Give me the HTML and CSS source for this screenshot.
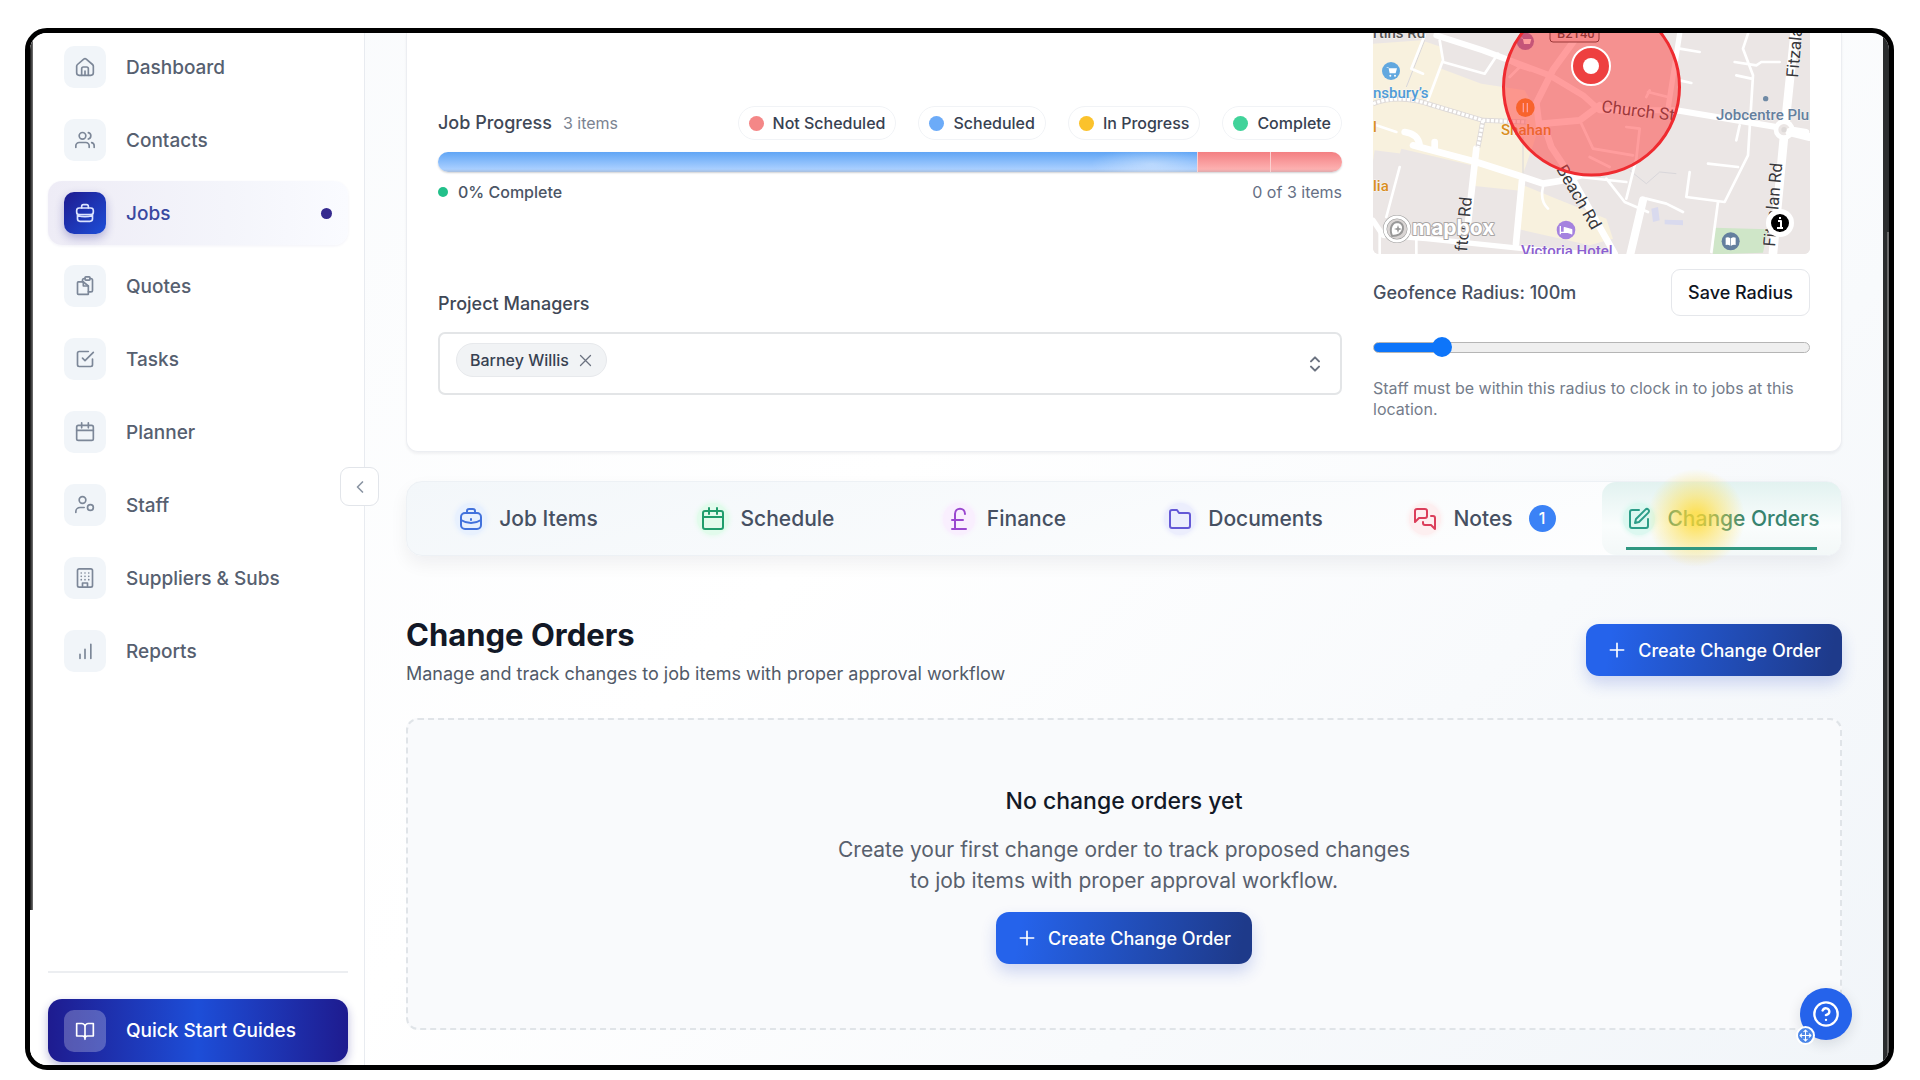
FILE: index.html
```html
<!DOCTYPE html>
<html lang="en">
<head>
    <meta charset="UTF-8">
    <meta name="viewport" content="width=device-width, initial-scale=1.0">
    <title>Job - Change Orders</title>
    <link rel="stylesheet" href="styles.css">
</head>
<body>

<div class="window">
    <div class="window-edge"></div>

    <!-- Sidebar -->
    <aside class="sidebar">
        <nav class="nav">
            <a class="nav-item" href="#">
                <span class="nav-icon"><svg viewBox="0 0 24 24"><path d="M2 11a3 3 0 0 1 1-2l7.500-6.500a2.500 2.500 0 0 1 3 0L21 9a3 3 0 0 1 1 2v8a3 3 0 0 1-3 3H5a3 3 0 0 1-3-3z"/><path d="M8 22v-8a2 2 0 0 1 2-2h4a2 2 0 0 1 2 2v8M12 17v5"/></svg></span>
                Dashboard
            </a>
            <a class="nav-item" href="#">
                <span class="nav-icon"><svg viewBox="0 0 24 24"><circle cx="9" cy="7" r="4"/><path d="M1 21v-2a4 4 0 0 1 4-4h8a4 4 0 0 1 4 4v2M23 21v-2a4 4 0 0 0-3-3.870M16 3.130a4 4 0 0 1 0 7.750"/></svg></span>
                Contacts
            </a>
            <a class="nav-item active" href="#">
                <span class="nav-icon"><svg viewBox="0 0 24 24"><path d="M5 6h14a3 3 0 0 1 3 3v2c0 2-2 3-4 3H6c-2 0-4-1-4-3V9a3 3 0 0 1 3-3z"/><path d="M3 14v5a3 3 0 0 0 3 3h12a3 3 0 0 0 3-3v-5M8 6V4a2 2 0 0 1 2-2h4a2 2 0 0 1 2 2v2M3 15c6 2 12 2 18 0"/></svg></span>
                Jobs
                <span class="nav-dot"></span>
            </a>
            <a class="nav-item" href="#">
                <span class="nav-icon"><svg viewBox="0 0 24 24"><path d="M4 7h6l6 5v10H4a1 1 0 0 1-1-1V8a1 1 0 0 1 1-1z"/><path d="M10 7v5h6M9 7V5a2 2 0 0 1 2-2h1M18 3h1a2 2 0 0 1 2 2v12a2 2 0 0 1-2 2h-3"/><rect x="12" y="1" width="6" height="4" rx="1"/></svg></span>
                Quotes
            </a>
            <a class="nav-item" href="#">
                <span class="nav-icon"><svg viewBox="0 0 24 24"><path d="m9 11 3 3L22 4"/><path d="M21 12v7a2 2 0 0 1-2 2H5a2 2 0 0 1-2-2V5a2 2 0 0 1 2-2h11"/></svg></span>
                Tasks
            </a>
            <a class="nav-item" href="#">
                <span class="nav-icon"><svg viewBox="0 0 24 24"><rect x="2" y="4" width="20" height="18" rx="2"/><path d="M16 1v6M8 1v6M2 10h20"/></svg></span>
                Planner
            </a>
            <a class="nav-item" href="#">
                <span class="nav-icon"><svg viewBox="0 0 24 24"><circle cx="9" cy="6" r="4"/><circle cx="18.500" cy="15" r="3.500"/><path d="M1 21v-1a5 5 0 0 1 5-5h5"/></svg></span>
                Staff
            </a>
            <a class="nav-item" href="#">
                <span class="nav-icon"><svg viewBox="0 0 24 24"><rect x="3" y="1" width="18" height="22" rx="2"/><path d="M9 22v-4h6v4M7.500 6h.01M12 6h.01M16.500 6h.01M7.500 10h.01M12 10h.01M16.500 10h.01M7.500 14h.01M12 14h.01M16.500 14h.01"/></svg></span>
                Suppliers &amp; Subs
            </a>
            <a class="nav-item" href="#">
                <span class="nav-icon"><svg viewBox="0 0 24 24"><path d="M6 21v-5M12 21V10M19 21V4"/></svg></span>
                Reports
            </a>
        </nav>
        <div class="sidebar-footer">
            <button class="guides-button" type="button">
                <span class="nav-icon"><svg viewBox="0 0 24 24"><path d="M2 3h6a4 4 0 0 1 4 4v14a3 3 0 0 0-3-3H2zM22 3h-6a4 4 0 0 0-4 4v14a3 3 0 0 1 3-3h7zM12 21v1"/></svg></span>
                Quick Start Guides
            </button>
        </div>
        <button class="collapse-button" type="button" aria-label="Collapse sidebar">
            <svg viewBox="0 0 24 24"><path d="m15 18-6-6 6-6"/></svg>
        </button>
    </aside>

    <main class="main">
        <section class="card">
            <div class="card-left">
                <div class="progress-head">
                    <h2 class="label">Job Progress</h2>
                    <span class="muted">3 items</span>
                    <ul class="legend">
                        <li><span class="dot red"></span>Not Scheduled</li>
                        <li><span class="dot blue"></span>Scheduled</li>
                        <li><span class="dot yellow"></span>In Progress</li>
                        <li><span class="dot green"></span>Complete</li>
                    </ul>
                </div>
                <div class="progress-bar">
                    <div class="segment scheduled" style="width: 84%"></div>
                    <div class="segment not-scheduled" style="width: 8%"></div>
                    <div class="segment not-scheduled" style="width: 8%"></div>
                </div>
                <div class="progress-foot">
                    <span class="done"><span class="small-dot"></span>0% Complete</span>
                    <span>0 of 3 items</span>
                </div>

                <h2 class="label managers-label">Project Managers</h2>
                <div class="managers-select">
                    <span class="chip">Barney Willis
                        <button type="button" aria-label="Remove Barney Willis"><svg viewBox="0 0 24 24"><path d="M20 4 4 20M4 4l16 16"/></svg></button>
                    </span>
                    <button class="select-toggle" type="button" aria-label="Choose managers"><svg viewBox="0 0 24 24"><path d="m6 8 6-6 6 6M6 16l6 6 6-6"/></svg></button>
                </div>
            </div>

            <div class="card-right">
                <div class="map">
                    <svg viewBox="0 0 437 221" preserveAspectRatio="xMidYMid slice">
                        <g transform="scale(.33333) translate(-70 -38)">
                            <rect x="70" y="38" width="1312" height="664" fill="#ebe6e5"/>
                            <path fill="#f8f1de" d="M70 70 215 60l60 20 0 65 120 45 130 20 50 90-20 60-45 130 110 45 150 60 20 60-70 20-220-50 10-90-145-15 0-70-130-40-160-20-30 200-60-40z"/>
                            <path fill="#ebe6e5" d="M155 385l210 50-20 200-260-20zM375 497l145 15-20 145-155-5z"/>
                            <path fill="#cfe6c8" d="M1095 622l160 5-15 70-150 5z"/>
                            <path fill="#d9daee" d="M905 565l20-5 5 40-20 5zM945 598l55 2v15l-55-3z"/>
                            <g fill="none" stroke="#d8d6da" stroke-width="3">
                                <path d="M520 350v110M225 60l-55 140M840 450l50 40 40-35 50 5"/>
                            </g>
                            <g fill="none" stroke="#fff" stroke-linecap="round" stroke-linejoin="round">
                                <path stroke-width="18" d="M260 45l140 45 200 75 100 60 50 45 230 0 390 65"/>
                                <path stroke-width="20" d="M690 38l-80 110-50 100 10 80M580 310l110-10 60-45M585 320l20 60 60 90 130 230"/>
                                <path stroke-width="20" d="M190 375l190 50 140 45 60 20 50-8 60-16M380 385l-30 270M517 480l-18 190M255 365v20M165 335q40 5 45 40"/>
                                <path stroke-width="26" d="M1335 38l-30 290-35 370"/>
                                <circle cx="1303" cy="328" r="24" fill="#ebe6e5" stroke-width="14"/>
                                <path stroke-width="24" d="M1320 335l60 15M880 540l-40 170"/>
                                <path stroke-width="16" d="M990 40l-35 225M70 600l30 45 130 10 290 30 190 15"/>
                                <path stroke-width="8" d="M225 45l-40 100 35 15M270 60l10 60-45 120M280 125l125 35 40-60M450 110l60 30-30 30M510 140l30 10M80 315l60 20M150 440l-40 150M895 215l60 15M890 230l10-20M695 310l35 75 120 20M830 320l40 5-10 90-30 120M770 475l55 70 70 30M720 410l60 30M690 470l140 15M890 535l60 15 50 25M1020 455l-10 75 115 15 70-140 15-240-30-80 20-60M1155 125l65 10 15-10h55M1160 165l45 10M1160 360l10-45M1075 430l90 10M1105 545l-20 150M990 85l60 10M990 180l35 8M580 500q-10 40 15 65M200 640v60M90 625v75"/>
                            </g>
                            <path d="M70 250q80-30 180 5l150 45 130 5M400 300l-15 80" fill="none" stroke="#ddd9d8" stroke-width="15"/>
                            <path d="M70 250q80-30 180 5l150 45 130 5M400 300l-15 80" fill="none" stroke="#fff" stroke-width="10" stroke-dasharray="9 4"/>
                            <circle cx="1303" cy="328" r="8" fill="#ddd9d8"/>
                            <circle cx="1248" cy="235" r="8" fill="#6f8aa5"/>
                            <circle cx="124" cy="152" r="27" fill="#62a8df"/>
                            <path d="M109 140h7l4 19h18l4-15h-24z" fill="#fff"/><circle cx="122" cy="166" r="3" fill="#fff"/><circle cx="136" cy="166" r="3" fill="#fff"/>
                            <circle cx="649" cy="629" r="28" fill="#a582df"/>
                            <path d="M632 617v25M632 636h34M666 642v-14l-22-6v13" fill="#fff" stroke="#fff" stroke-width="4"/>
                            <circle cx="1143" cy="663" r="27" fill="#647f9e"/>
                            <path d="M1128 652q8-3 14 2v22q-7-4-14-2zM1158 652q-8-3-14 2v22q7-4 14-2z" fill="#fff"/>
                            <circle cx="527" cy="63" r="26" fill="#8b6fb5"/>
                            <path d="M512 52h7l4 19h18l4-15h-24z" fill="#fff"/>
                            <circle cx="527" cy="262" r="28" fill="#f08a1d"/>
                            <path d="M521 248v10M521 258v18M533 248v28" stroke="#fff" stroke-width="4"/>
                        </g>
                        <g class="map-text">
                            <text x="0" y="5">rtins Rd</text>
                            <text x="0" y="65" fill="#4f9bd8">nsbury’s</text>
                            <text x="128" y="102" fill="#d98e1f">Shahan</text>
                            <text x="0" y="99" fill="#d98e1f">l</text>
                            <text x="0" y="158" fill="#d98e1f">lia</text>
                            <text x="343" y="87" fill="#647f9e">Jobcentre Plu</text>
                            <text x="148" y="223" fill="#8b5fd0">Victoria Hotel</text>
                            <text class="road" transform="translate(228 79) rotate(7)">Church St</text>
                            <text class="road" transform="translate(183 136) rotate(60)">Beach Rd</text>
                            <text class="road" transform="translate(94 219) rotate(-85)">fton Rd</text>
                            <text class="road" transform="translate(425 45) rotate(-85)">Fitzalan</text>
                            <text class="road" transform="translate(402 214) rotate(-85)">Fitzalan Rd</text>
                        </g>
                        <rect x="177" y="-9" width="49" height="18" rx="3" fill="#f0d5d5" stroke="#333" stroke-width="1"/>
                        <text class="shield" x="184" y="5">B2140</text>
                        <circle cx="218.500" cy="54" r="88" fill="#ff3b3b" fill-opacity=".5" stroke="#ef2b30" stroke-width="3"/>
                        <circle cx="218" cy="33" r="19" fill="#ee4040" stroke="#fff" stroke-width="2"/>
                        <circle cx="218" cy="33" r="8" fill="#fff"/>
                        <circle cx="24" cy="196" r="12" fill="#d9d5d4" stroke="#999" stroke-width="4"/>
                        <circle cx="24" cy="196" r="12" fill="none" stroke="#fff" stroke-width="3"/>
                        <path d="M19 203c-3-8 0-14 6-14a6 6 0 0 1 5 7c-1 5-6 7-11 7z" fill="#fff" stroke="#999"/>
                        <path d="m25 192 1 3 3 1-3 1-1 3-1-3-3-1 3-1z" fill="#999"/>
                        <text class="mapbox" x="39" y="202">mapbox</text>
                        <circle cx="407" cy="190" r="14" fill="#fff"/>
                        <circle cx="407" cy="190" r="9" fill="#000"/>
                        <path d="M405 188h3v6M404 195h6M407 184v2" fill="none" stroke="#fff" stroke-width="2"/>
                    </svg>
                </div>
                <div class="radius-row">
                    <label for="radius">Geofence Radius: 100m</label>
                    <button class="save-button" type="button">Save Radius</button>
                </div>
                <input class="slider" id="radius" type="range" min="0" max="100" value="14">
                <p class="hint">Staff must be within this radius to clock in to jobs at this location.</p>
            </div>
        </section>

        <nav class="tabs">
            <a class="tab" href="#">
                <span class="tab-icon job"><svg viewBox="0 0 24 24"><rect x="2" y="6" width="20" height="16" rx="4"/><path d="M8 6V4a2 2 0 0 1 2-2h4a2 2 0 0 1 2 2v2M2 13c6 4 14 4 20 0M12 12v1"/></svg></span>
                Job Items
            </a>
            <a class="tab" href="#">
                <span class="tab-icon schedule"><svg viewBox="0 0 24 24"><rect x="2" y="4" width="20" height="18" rx="2"/><path d="M16 1v6M8 1v6M2 10h20"/></svg></span>
                Schedule
            </a>
            <a class="tab" href="#">
                <span class="tab-icon finance"><svg viewBox="0 0 24 24"><path d="M18 7c0-7-10-7-10 0v14M5 13h11M5 22h14"/></svg></span>
                Finance
            </a>
            <a class="tab" href="#">
                <span class="tab-icon documents"><svg viewBox="0 0 24 24"><path d="M22 19a2 2 0 0 1-2 2H4a2 2 0 0 1-2-2V5a2 2 0 0 1 2-2h5l2 3h9a2 2 0 0 1 2 2z"/></svg></span>
                Documents
            </a>
            <a class="tab" href="#">
                <span class="tab-icon notes"><svg viewBox="0 0 24 24"><path d="M14 9a2 2 0 0 1-2 2H6l-4 4V4a2 2 0 0 1 2-2h8a2 2 0 0 1 2 2zM18 9h2a2 2 0 0 1 2 2v11l-4-4h-6a2 2 0 0 1-2-2v-1"/></svg></span>
                Notes
                <span class="badge">1</span>
            </a>
            <a class="tab current" href="#">
                <span class="tab-icon changes"><svg viewBox="0 0 24 24"><path d="M12 3H5a2 2 0 0 0-2 2v14a2 2 0 0 0 2 2h14a2 2 0 0 0 2-2v-7"/><path d="M18.400 2.600a2.100 2.100 0 0 1 3 3L12 15l-4 1 1-4z"/></svg></span>
                Change Orders
                <span class="click-glow"></span>
            </a>
        </nav>

        <header class="page-head">
            <div>
                <h1>Change Orders</h1>
                <p>Manage and track changes to job items with proper approval workflow</p>
            </div>
            <button class="create-button" type="button">
                <svg viewBox="0 0 24 24"><path d="M12 4v16M4 12h16"/></svg>
                Create Change Order
            </button>
        </header>

        <section class="empty">
            <h3>No change orders yet</h3>
            <p>Create your first change order to track proposed changes to job items with proper approval workflow.</p>
            <button class="create-button" type="button">
                <svg viewBox="0 0 24 24"><path d="M12 4v16M4 12h16"/></svg>
                Create Change Order
            </button>
        </section>
    </main>

    <div class="scrollbar"><div class="scroll-thumb"></div></div>

    <div class="help">
        <button class="help-button" type="button" aria-label="Help">
            <svg viewBox="0 0 24 24"><circle cx="12" cy="12" r="10"/><path d="M9.100 9a3 3 0 0 1 5.800 1c0 2-3 3-3 3M12 17h.01"/></svg>
        </button>
        <span class="help-move"><svg viewBox="0 0 24 24"><path d="M12 2v20M2 12h20M9 5l3-3 3 3M9 19l3 3 3-3M5 9l-3 3 3 3M19 9l3 3-3 3"/></svg></span>
    </div>
</div>

</body>
</html>
```

FILE: styles.css
```css
* {
    box-sizing: border-box;
}

body {
    margin: 0;
    padding: 28px 26px 10px 25px;
    height: 100vh;
    background: #ffffff;
    font-family: Inter, "Liberation Sans", sans-serif;
    color: #374151;
}

h1, h2, h3, p, ul {
    margin: 0;
    padding: 0;
}

a {
    color: inherit;
    text-decoration: none;
}

button {
    font-family: inherit;
    cursor: pointer;
}

svg {
    display: block;
    fill: none;
    stroke: currentColor;
    stroke-width: 2;
    stroke-linecap: round;
    stroke-linejoin: round;
}

.window {
    position: relative;
    display: flex;
    height: 100%;
    border: 5px solid #000000;
    border-radius: 22px;
    overflow: hidden;
    background: linear-gradient(135deg, #f8fafc 0%, #ffffff 45%, #f1f5f9 100%);
}

.window-edge {
    position: absolute;
    top: 0;
    left: 0;
    z-index: 2;
    width: 3px;
    height: 85%;
    background: linear-gradient(90deg, #111111, #777777);
}

/* Sidebar */
.sidebar {
    position: relative;
    flex: none;
    display: flex;
    flex-direction: column;
    justify-content: space-between;
    width: 335px;
    padding: 2px 16px 3px 18px;
    background: #ffffff;
    border-right: 1px solid #e8ebf0;
}

.nav {
    display: flex;
    flex-direction: column;
    gap: 9px;
}

.nav-item {
    display: flex;
    align-items: center;
    gap: 20px;
    height: 64px;
    padding: 0 16px;
    border-radius: 14px;
    font-size: 19px;
    font-weight: 500;
    color: #566070;
}

.nav-item.active {
    background: linear-gradient(90deg, #eeecf6, #f4f5fb 60%, #fafbff);
    box-shadow: 0 1px 3px rgba(30, 27, 140, 0.06);
    color: #3949a0;
}

.nav-icon {
    flex: none;
    display: flex;
    align-items: center;
    justify-content: center;
    width: 42px;
    height: 42px;
    border-radius: 10px;
    background: #f1f5f9;
    color: #7c8798;
}

.nav-icon svg {
    width: 20px;
    height: 20px;
}

.active .nav-icon {
    background: linear-gradient(135deg, #1e1b8f, #1d4ed8);
    box-shadow: 0 4px 10px rgba(30, 27, 140, 0.3);
    color: #dbe4ff;
}

.nav-dot {
    width: 11px;
    height: 11px;
    margin-left: auto;
    border-radius: 50%;
    background: #352a8f;
}

.sidebar-footer {
    padding-top: 26px;
    border-top: 2px solid #eceef1;
}

.guides-button {
    display: flex;
    align-items: center;
    gap: 20px;
    width: 100%;
    height: 63px;
    padding: 0 16px;
    border: none;
    border-radius: 14px;
    background: linear-gradient(90deg, #1e1b8f, #1d4ed8 50%, #1e1b8f);
    box-shadow: 0 4px 10px rgba(30, 27, 140, 0.3);
    font-size: 19px;
    font-weight: 500;
    color: #ffffff;
}

.guides-button .nav-icon {
    background: rgba(255, 255, 255, 0.25);
    color: #ffffff;
}

.collapse-button {
    position: absolute;
    top: 434px;
    right: -15px;
    z-index: 1;
    display: flex;
    align-items: center;
    justify-content: center;
    width: 39px;
    height: 39px;
    padding: 0;
    border: 1px solid #e2e5ea;
    border-radius: 9px;
    background: #ffffff;
    color: #8b95a3;
}

.collapse-button svg {
    width: 20px;
    height: 20px;
}

/* Main column */
.main {
    flex: 1;
    min-width: 0;
    padding: 0 41px;
}

.card {
    display: flex;
    gap: 31px;
    height: 419px;
    padding: 0 31px;
    border: 1px solid #eceef2;
    border-top: none;
    border-radius: 0 0 12px 12px;
    background: #ffffff;
    box-shadow: 0 2px 3px rgba(15, 23, 42, 0.05);
}

.card-left {
    flex: 1;
    min-width: 0;
    padding-top: 73px;
}

.card-right {
    flex: none;
    width: 437px;
}

.progress-head {
    display: flex;
    align-items: center;
    gap: 11px;
    height: 34px;
    font-size: 16px;
}

.label {
    font-size: 18px;
    font-weight: 500;
    line-height: 24px;
    color: #404856;
}

.muted {
    color: #7b8391;
}

.legend {
    display: flex;
    gap: 22px;
    margin-left: auto;
    list-style: none;
}

.legend li {
    display: flex;
    align-items: center;
    gap: 9px;
    height: 34px;
    padding: 0 10px;
    border: 1px solid #f1f3f6;
    border-radius: 17px;
    font-weight: 500;
}

.dot {
    width: 15px;
    height: 15px;
    border-radius: 50%;
}

.red { background: #f48787; }
.blue { background: #6cabf8; }
.yellow { background: #fbc22c; }
.green { background: #41d39a; }

.progress-bar {
    display: flex;
    height: 20px;
    margin-top: 12px;
    border-radius: 10px;
    overflow: hidden;
    box-shadow: 0 1px 2px rgba(15, 23, 42, 0.2);
}

.segment + .segment {
    border-left: 1px solid #fbd0d0;
}

.scheduled {
    background:
        radial-gradient(ellipse 60px 16px at 94% 60%, rgba(255, 255, 255, 0.35), transparent),
        linear-gradient(#60a5f5, #a9cfff 85%, #a8bfdf);
}

.not-scheduled { background: linear-gradient(#f37f82, #fdb0b0 85%, #dfaaad); }

.progress-foot {
    display: flex;
    justify-content: space-between;
    margin-top: 9px;
    font-size: 16px;
    line-height: 22px;
    color: #667085;
}

.done {
    display: flex;
    align-items: center;
    gap: 10px;
    font-weight: 500;
    color: #4b5565;
}

.small-dot {
    width: 10px;
    height: 10px;
    border-radius: 50%;
    background: #22c08a;
}

.managers-label {
    margin-top: 89px;
}

.managers-select {
    display: flex;
    align-items: flex-start;
    justify-content: space-between;
    height: 63px;
    margin-top: 16px;
    padding: 9px 16px;
    border: 2px solid #e3e5e7;
    border-radius: 7px;
}

.chip {
    display: flex;
    align-items: center;
    gap: 9px;
    height: 34px;
    padding: 0 13px;
    border: 1px solid #e7e9ec;
    border-radius: 17px;
    background: #f1f3f5;
    font-size: 16px;
    font-weight: 500;
}

.chip button,
.select-toggle {
    padding: 0;
    border: none;
    background: none;
    color: #6b7280;
}

.chip svg {
    width: 15px;
    height: 15px;
}

.select-toggle {
    align-self: center;
}

.select-toggle svg {
    width: 18px;
    height: 16px;
    stroke-width: 3;
}

.map {
    height: 221px;
    border-radius: 0 0 6px 6px;
    overflow: hidden;
    background: #ebe6e5;
}

.map svg {
    width: 100%;
    height: 100%;
    stroke: none;
    stroke-linecap: butt;
}

.map text {
    font-family: Roboto, sans-serif;
    font-size: 15px;
    font-weight: 500;
    paint-order: stroke;
    stroke: rgba(255, 255, 255, 0.6);
    stroke-width: 1px;
}

.map .road {
    font-size: 17px;
    font-weight: 400;
    fill: #38383c;
}

.map .shield {
    font-size: 13px;
    fill: #333333;
}

.map-text {
    fill: #555555;
}

.map .mapbox {
    font-family: Inter, sans-serif;
    font-size: 21px;
    font-weight: 700;
    fill: #ffffff;
    stroke: #aaa6a6;
    stroke-width: 2px;
}

.radius-row {
    display: flex;
    align-items: center;
    justify-content: space-between;
    margin-top: 15px;
    font-size: 18px;
    font-weight: 500;
    color: #475060;
}

.save-button {
    height: 47px;
    padding: 0 16px;
    border: 1px solid #e5e7eb;
    border-radius: 9px;
    background: #ffffff;
    font-size: 18px;
    font-weight: 500;
    color: #10151f;
}

.slider {
    appearance: none;
    display: block;
    width: 100%;
    height: 20px;
    margin: 21px 0 0;
    background: transparent;
}

.slider::-webkit-slider-runnable-track {
    height: 11px;
    border: 1px solid #b5b5b5;
    border-radius: 6px;
    background: linear-gradient(90deg, #0d75fa 16%, #efefef 16%);
}

.slider::-webkit-slider-thumb {
    appearance: none;
    width: 20px;
    height: 20px;
    margin-top: -6px;
    border-radius: 50%;
    background: #0d75fa;
}

.hint {
    margin-top: 21px;
    font-size: 16px;
    line-height: 21px;
    color: #747c8a;
}

/* Tabs */
.tabs {
    display: grid;
    grid-template-columns: repeat(6, 1fr);
    height: 75px;
    margin-top: 29px;
    border: 1px solid #edf1f5;
    border-radius: 16px;
    background: linear-gradient(165deg, #f3f7fa, #ffffff);
    box-shadow: 0 8px 18px rgba(15, 23, 42, 0.06);
}

.tab {
    position: relative;
    display: flex;
    align-items: center;
    justify-content: center;
    gap: 12px;
    font-size: 21px;
    font-weight: 500;
    white-space: nowrap;
    color: #465062;
}

.tab-icon {
    display: flex;
    align-items: center;
    justify-content: center;
    width: 32px;
    height: 32px;
    border-radius: 50%;
}

.tab-icon svg {
    width: 24px;
    height: 24px;
}

.job { background: #e8f1fe; box-shadow: 0 0 4px 1px #e8f1fe; color: #4272dc; }
.schedule { background: #e2fbec; box-shadow: 0 0 4px 1px #e2fbec; color: #1f9d6c; }
.finance { background: #f9effe; box-shadow: 0 0 4px 1px #f9effe; color: #9a48cf; }
.documents { background: #eceefd; box-shadow: 0 0 4px 1px #eceefd; color: #6459d6; }
.notes { background: #fdeff0; box-shadow: 0 0 4px 1px #fdeff0; color: #db3e5a; }
.changes { background: #dcf8f0; box-shadow: 0 0 4px 1px #dcf8f0; color: #2c9d88; }

.badge {
    width: 27px;
    height: 27px;
    margin-left: 4px;
    border-radius: 50%;
    background: #3b82f6;
    font-size: 16px;
    line-height: 27px;
    text-align: center;
    color: #ffffff;
}

.current {
    border-radius: 14px;
    background: linear-gradient(#e2f2f0, #fafdfd 60%, #f3f8f8);
    color: #37836f;
}

.current::after {
    content: "";
    position: absolute;
    right: 24px;
    bottom: 5px;
    left: 24px;
    height: 3px;
    background: #309781;
}

.click-glow {
    position: absolute;
    top: -15px;
    left: 43px;
    width: 102px;
    height: 102px;
    border-radius: 50%;
    background: radial-gradient(circle, rgba(255, 218, 50, 0.8) 8%, rgba(255, 222, 70, 0.5) 32%, rgba(255, 228, 100, 0) 68%);
}

/* Page heading */
.page-head {
    display: flex;
    align-items: center;
    justify-content: space-between;
    margin-top: 57px;
}

.page-head h1 {
    font-size: 31px;
    font-weight: 700;
    line-height: 44px;
    color: #121826;
}

.page-head p {
    margin-top: 4px;
    font-size: 18px;
    line-height: 26px;
    color: #515a68;
}

.create-button {
    display: flex;
    align-items: center;
    gap: 11px;
    height: 52px;
    padding: 0 21px;
    border: none;
    border-radius: 13px;
    background: linear-gradient(100deg, #2563eb 10%, #1e3a8a 95%);
    box-shadow: 0 8px 16px rgba(37, 70, 200, 0.2);
    font-size: 18px;
    font-weight: 500;
    color: #ffffff;
}

.create-button svg {
    width: 20px;
    height: 20px;
}

.empty {
    display: flex;
    flex-direction: column;
    align-items: center;
    height: 312px;
    margin-top: 31px;
    padding-top: 65px;
    border: 2px dashed #e0e4e8;
    border-radius: 12px;
    background: #f9fafc;
    text-align: center;
}

.empty h3 {
    font-size: 23px;
    font-weight: 500;
    line-height: 32px;
    color: #121826;
}

.empty p {
    max-width: 580px;
    margin: 17px 0 16px;
    font-size: 21px;
    line-height: 31px;
    color: #58606d;
}

/* Right edge */
.scrollbar {
    flex: none;
    width: 6px;
    padding: 199px 0 0 4px;
    background: #2b2d2e;
}

.scroll-thumb {
    height: 100%;
    background: #6b6b6b;
}

.help {
    position: absolute;
    right: 37px;
    bottom: 25px;
}

.help-button {
    display: flex;
    align-items: center;
    justify-content: center;
    width: 52px;
    height: 52px;
    padding: 0;
    border: none;
    border-radius: 50%;
    background: #2563eb;
    box-shadow: 0 4px 14px rgba(15, 23, 42, 0.12);
    color: #ffffff;
}

.help-button svg {
    width: 28px;
    height: 28px;
}

.help-move {
    position: absolute;
    bottom: -5px;
    left: -4px;
    display: flex;
    align-items: center;
    justify-content: center;
    width: 19px;
    height: 19px;
    border: 2px solid #ffffff;
    border-radius: 50%;
    background: #4a86e8;
    color: #ffffff;
}

.help-move svg {
    width: 13px;
    height: 13px;
}
```
